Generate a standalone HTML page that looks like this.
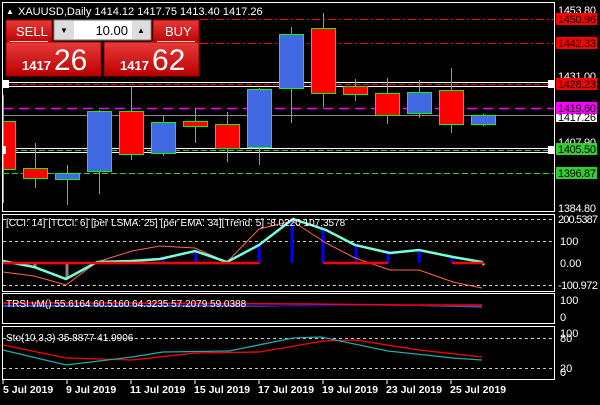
<!DOCTYPE html><html><head><style>
body{margin:0;background:#000;width:600px;height:400px;overflow:hidden;font-family:"Liberation Sans",sans-serif}
svg text{font-family:"Liberation Sans",sans-serif}
</style></head><body>
<svg width="600" height="400" viewBox="0 0 600 400" xmlns="http://www.w3.org/2000/svg">
<rect width="600" height="400" fill="#000"/>
<g fill="none" stroke="#fff" stroke-width="1">
<rect x="2.5" y="2.5" width="552" height="209"/>
<rect x="2.5" y="214.5" width="552" height="77"/>
<rect x="2.5" y="293.5" width="552" height="30"/>
<rect x="2.5" y="326.5" width="552" height="53"/>
</g>
<g stroke-width="1">
<line x1="200" y1="19.5" x2="554" y2="19.5" stroke="#f00" stroke-dasharray="8,3,2,3"/>
<line x1="200" y1="43.5" x2="554" y2="43.5" stroke="#f00" stroke-dasharray="8,3,2,3"/>
<line x1="3" y1="82.5" x2="554" y2="82.5" stroke="#fff"/>
<line x1="3" y1="84.5" x2="554" y2="84.5" stroke="#f00" stroke-dasharray="6,3"/>
<line x1="3" y1="86.5" x2="554" y2="86.5" stroke="#fff"/>
<line x1="3" y1="108.5" x2="554" y2="108.5" stroke="#f0f" stroke-width="1.5" stroke-dasharray="10,6"/>
<line x1="3" y1="115.5" x2="554" y2="115.5" stroke="#888"/>
<line x1="3" y1="148.5" x2="554" y2="148.5" stroke="#fff"/>
<line x1="3" y1="150.5" x2="554" y2="150.5" stroke="#3c3" stroke-dasharray="6,3"/>
<line x1="3" y1="152.5" x2="554" y2="152.5" stroke="#fff"/>
<line x1="3" y1="173.5" x2="554" y2="173.5" stroke="#3c3" stroke-dasharray="6,3"/>
</g>
<g stroke="#0f0" stroke-width="1">
<line x1="3.5" y1="95" x2="3.5" y2="203"/><rect x="3.5" y="121.5" width="12" height="48" fill="#f00"/>
<line x1="35.5" y1="143" x2="35.5" y2="188"/><rect x="23.5" y="168.5" width="24" height="10" fill="#f00"/>
<line x1="67.5" y1="165" x2="67.5" y2="205"/><rect x="55.5" y="173.5" width="24" height="6" fill="#4169e1"/>
<line x1="99.5" y1="110" x2="99.5" y2="194"/><rect x="87.5" y="111.5" width="24" height="60" fill="#4169e1"/>
<line x1="131.5" y1="87" x2="131.5" y2="160"/><rect x="119.5" y="111.5" width="24" height="43" fill="#f00"/>
<line x1="163.5" y1="116" x2="163.5" y2="156"/><rect x="151.5" y="122.5" width="24" height="31" fill="#4169e1"/>
<line x1="195.5" y1="108" x2="195.5" y2="143"/><rect x="183.5" y="121.5" width="24" height="5" fill="#f00"/>
<line x1="227.5" y1="112" x2="227.5" y2="162"/><rect x="215.5" y="124.5" width="24" height="24" fill="#f00"/>
<line x1="259.5" y1="88" x2="259.5" y2="165"/><rect x="247.5" y="89.5" width="24" height="58" fill="#4169e1"/>
<line x1="291.5" y1="27" x2="291.5" y2="123"/><rect x="279.5" y="34.5" width="24" height="54" fill="#4169e1"/>
<line x1="323.5" y1="13" x2="323.5" y2="107"/><rect x="311.5" y="28.5" width="24" height="65" fill="#f00"/>
<line x1="355.5" y1="79" x2="355.5" y2="101"/><rect x="343.5" y="86.5" width="24" height="8" fill="#f00"/>
<line x1="387.5" y1="78" x2="387.5" y2="124"/><rect x="375.5" y="93.5" width="24" height="22" fill="#f00"/>
<line x1="419.5" y1="80" x2="419.5" y2="118"/><rect x="407.5" y="92.5" width="24" height="21" fill="#4169e1"/>
<line x1="451.5" y1="68" x2="451.5" y2="133"/><rect x="439.5" y="90.5" width="24" height="34" fill="#f00"/>
<line x1="483.5" y1="114" x2="483.5" y2="126"/><rect x="471.5" y="115.5" width="24" height="9" fill="#4169e1"/>
</g>
<g font-size="11" fill="#fff">
<text x="558" y="14" textLength="38">1453.80</text>
<rect x="556" y="13" width="41" height="12" fill="#f00"/><text x="558" y="23" fill="#000" textLength="38">1450.96</text>
<rect x="556" y="37" width="41" height="12" fill="#f00"/><text x="558" y="47" fill="#000" textLength="38">1442.33</text>
<text x="558" y="80" textLength="38">1431.00</text>
<rect x="556" y="78" width="41" height="12" fill="#f00"/><text x="558" y="88" fill="#000" textLength="38">1428.23</text>
<rect x="556" y="102" width="41" height="12" fill="#f0f"/><text x="558" y="112" fill="#000" textLength="38">1419.60</text>
<rect x="556" y="114" width="41" height="8" fill="#fff"/><text x="558" y="121" fill="#000" textLength="38">1417.26</text>
<text x="558" y="146" textLength="38">1407.90</text>
<rect x="556" y="143" width="41" height="12" fill="#3c3"/><text x="558" y="153" fill="#000" textLength="38">1405.50</text>
<rect x="556" y="167" width="41" height="12" fill="#3c3"/><text x="558" y="177" fill="#000" textLength="38">1396.87</text>
<text x="558" y="212" textLength="38">1384.80</text>
<text x="558" y="223" textLength="40">200.5387</text>
<text x="560" y="245">100</text>
<text x="560" y="267">0.00</text>
<text x="558" y="289" textLength="40">-100.972</text>
<text x="560" y="304">100</text>
<text x="560" y="321">0</text>
<text x="560" y="337">100</text>
<text x="560" y="342">80</text>
<text x="560" y="372">20</text>
<text x="560" y="376">0</text>
</g>
<rect x="548" y="80" width="7" height="8" fill="#fff"/><rect x="548" y="146" width="7" height="8" fill="#fff"/>
<rect x="3" y="80" width="6" height="8" fill="#fff"/><rect x="3" y="146" width="3" height="8" fill="#fff"/>
<text x="6" y="14" font-size="8" fill="#fff">▲</text>
<text x="18" y="15" font-size="11" fill="#fff">XAUUSD,Daily  1414.12 1417.75 1413.40 1417.26</text>
<defs><linearGradient id="rg" x1="0" y1="0" x2="0" y2="1"><stop offset="0" stop-color="#e83a3a"/><stop offset="1" stop-color="#b00"/></linearGradient></defs>
<rect x="6" y="20" width="46" height="23" fill="url(#rg)" stroke="#900"/>
<rect x="153" y="20" width="46" height="23" fill="url(#rg)" stroke="#900"/>
<rect x="6" y="42" width="95" height="34" fill="url(#rg)" stroke="#900"/>
<rect x="104" y="42" width="95" height="34" fill="url(#rg)" stroke="#900"/>
<line x1="10" y1="41.5" x2="48" y2="41.5" stroke="#fcc"/>
<line x1="157" y1="41.5" x2="195" y2="41.5" stroke="#fcc"/>
<text x="16" y="36" font-size="13" fill="#fff">SELL</text>
<text x="165" y="36" font-size="13" fill="#fff">BUY</text>
<rect x="54" y="20" width="97" height="20" fill="#ddd" stroke="#888"/>
<rect x="74" y="21" width="58" height="18" fill="#fff"/>
<text x="60" y="33" font-size="8" fill="#000">▼</text><text x="137" y="33" font-size="8" fill="#000">▲</text>
<text x="128" y="35" font-size="13" fill="#000" text-anchor="end">10.00</text>
<text x="22" y="70" font-size="13" font-weight="bold" fill="#fff">1417</text>
<text x="54" y="70" font-size="30" fill="#fff">26</text>
<text x="120" y="70" font-size="13" font-weight="bold" fill="#fff">1417</text>
<text x="152" y="70" font-size="30" fill="#fff">62</text>
<g stroke="#ccc" stroke-dasharray="3,3" stroke-width="1">
<line x1="3" y1="219.5" x2="554" y2="219.5"/><line x1="3" y1="241.5" x2="554" y2="241.5"/><line x1="3" y1="285.5" x2="554" y2="285.5"/>
<line x1="3" y1="338.5" x2="554" y2="338.5"/><line x1="3" y1="368.5" x2="554" y2="368.5"/>
</g>
<g stroke="#00f" stroke-width="3">
<line x1="163" y1="263" x2="163" y2="257"/><line x1="196" y1="263" x2="196" y2="251"/><line x1="259" y1="263" x2="259" y2="245"/>
<line x1="292" y1="263" x2="292" y2="220"/><line x1="323" y1="263" x2="323" y2="230"/><line x1="356" y1="263" x2="356" y2="245"/>
<line x1="388" y1="263" x2="388" y2="253"/><line x1="419" y1="263" x2="419" y2="251"/><line x1="452" y1="263" x2="452" y2="258"/>
</g>
<g stroke="#888" stroke-width="3"><line x1="35" y1="263" x2="35" y2="268"/><line x1="67" y1="263" x2="67" y2="278"/></g>
<polyline fill="none" stroke="#f64" stroke-width="1" points="3,272 34,276 66,285 97,262 132,251 160,246 195,248 227,262 259,229 292,221 326,243 355,258 390,270 419,270 453,282 482,288"/>
<polyline fill="none" stroke="#7fd" stroke-width="2.5" points="3,261 34,267 66,279 97,262 132,261 160,259 195,251 227,262 259,245 293,219 326,230 355,245 390,253 419,250 453,257 482,262 484,265"/>
<g stroke="#f00" stroke-width="2.5"><line x1="3" y1="263" x2="259" y2="263"/><line x1="323" y1="263" x2="388" y2="263"/><line x1="452" y1="263" x2="484" y2="263"/></g>
<text x="6" y="226" font-size="10" fill="#fff">[CCI: 14] [TCCI: 6] [per LSMA: 25] [per EMA: 34][Trend: 5]  -8.0220 107.3578</text>
<polyline fill="none" stroke="#888" points="3,306 275,306 344,305 390,305 482,307"/>
<polyline fill="none" stroke="#00f" points="3,305 229,305 287,306 344,305 482,306"/>
<polyline fill="none" stroke="#f00" stroke-width="1.5" points="3,303 92,303 126,303 307,304 401,305 436,305 482,305"/>
<text x="6" y="307" font-size="10" fill="#fff">TRSI  vM() 55.6164 60.5160 64.3235 57.2079 59.0388</text>
<polyline fill="none" stroke="#f00" stroke-width="1.3" points="3,345 66,358 132,360 195,353 259,352 323,341 355,340 419,350 482,357"/>
<polyline fill="none" stroke="#2aa" stroke-width="1.3" points="3,350 66,365 132,357 163,352 229,351 293,338 321,337 388,351 453,358 482,360"/>
<text x="6" y="341" font-size="10" fill="#fff">Sto(10,3,3) 35.8877 41.9906</text>
<g stroke="#fff"><line x1="3" y1="380" x2="3" y2="384"/><line x1="67" y1="380" x2="67" y2="384"/><line x1="131" y1="380" x2="131" y2="384"/><line x1="195" y1="380" x2="195" y2="384"/><line x1="259" y1="380" x2="259" y2="384"/><line x1="323" y1="380" x2="323" y2="384"/><line x1="387" y1="380" x2="387" y2="384"/><line x1="451" y1="380" x2="451" y2="384"/></g>
<g font-size="10.5" font-weight="bold" fill="#fff">
<text x="3" y="393">5 Jul 2019</text><text x="66" y="393">9 Jul 2019</text><text x="130" y="393">11 Jul 2019</text><text x="194" y="393">15 Jul 2019</text><text x="258" y="393">17 Jul 2019</text><text x="322" y="393">19 Jul 2019</text><text x="386" y="393">23 Jul 2019</text><text x="450" y="393">25 Jul 2019</text>
</g>
</svg>
</body></html>
